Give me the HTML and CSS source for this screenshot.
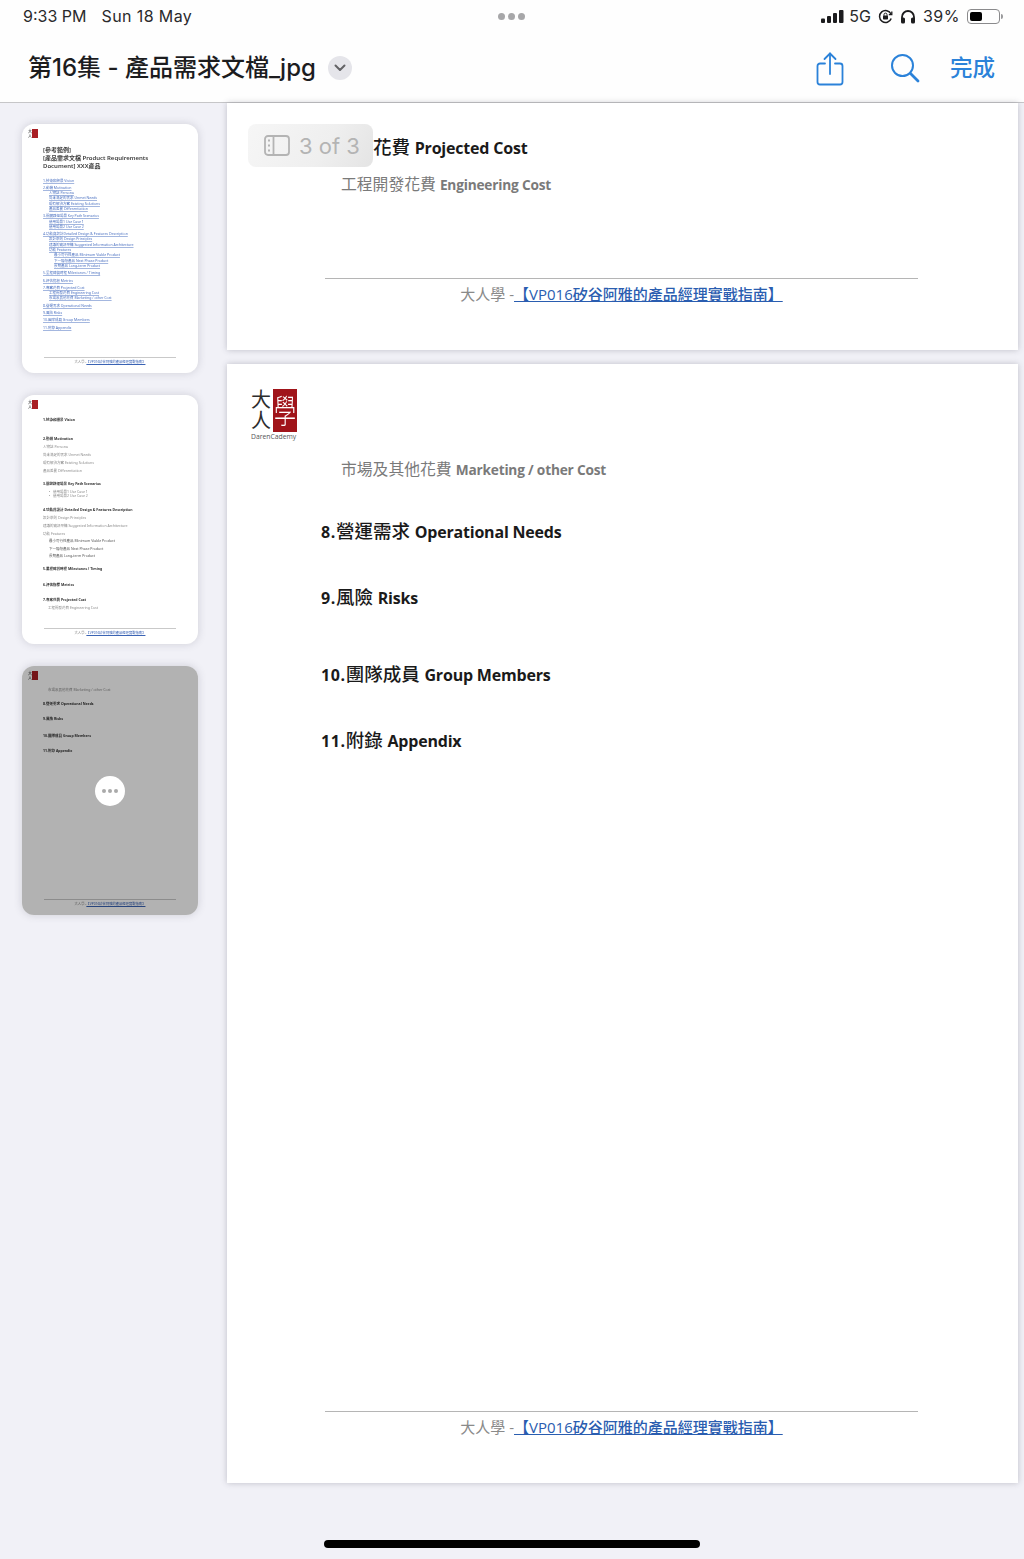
FILE: index.html
```html
<!DOCTYPE html>
<html lang="zh-Hant">
<head>
<meta charset="utf-8">
<title>第16集 - 產品需求文檔_jpg</title>
<link rel="stylesheet" href="styles.css">
</head>
<body>
<div class="app">
  <header class="header">
    <div class="status">
      <div class="status-left"><span>9:33 PM</span><span class="status-date">Sun 18 May</span></div>
      <div class="status-dots"><i></i><i></i><i></i></div>
      <div class="status-right">
        <svg class="signal" width="24" height="13" viewBox="0 0 24 13"><rect x="0" y="8.5" width="4" height="4.5" rx="1"/><rect x="6" y="6" width="4" height="7" rx="1"/><rect x="12" y="3" width="4" height="10" rx="1"/><rect x="18" y="0" width="4.5" height="13" rx="1"/></svg>
        <span>5G</span>
        <svg class="glyph" width="15" height="15" viewBox="0 0 15 15" fill="none" stroke="#1c1c1e" stroke-width="1.5"><path d="M13.2 9.5A6 6 0 1 1 13 5"/><path d="M13.8 2.6V5.6H10.8" stroke-width="1.3"/><rect x="5" y="6.6" width="5" height="3.9" rx=".7" fill="#1c1c1e" stroke="none"/><path d="M6 6.8V5.6a1.5 1.5 0 0 1 3 0v1.2" stroke-width="1"/></svg>
        <svg class="glyph" width="16" height="15" viewBox="0 0 16 15" fill="none"><path d="M2 10V8a6 6 0 0 1 12 0v2" stroke="#1c1c1e" stroke-width="1.8"/><rect x="1" y="8.5" width="4" height="6" rx="1.6" fill="#1c1c1e"/><rect x="11" y="8.5" width="4" height="6" rx="1.6" fill="#1c1c1e"/></svg>
        <span class="pct">39%</span>
        <span class="battery"><span class="battery-level"></span></span>
      </div>
    </div>
    <div class="toolbar">
      <div class="title-wrap">
        <h1 class="doc-title">第16集 - 產品需求文檔_jpg</h1>
        <span class="chevron"><svg width="12" height="8" viewBox="0 0 12 8" fill="none" stroke="#636366" stroke-width="2" stroke-linecap="round" stroke-linejoin="round"><path d="M1.5 1.5 6 6l4.5-4.5"/></svg></span>
      </div>
      <div class="actions">
        <svg class="share" width="28" height="34" viewBox="0 0 28 34" fill="none" stroke="#2b82d9" stroke-width="1.8" stroke-linecap="round" stroke-linejoin="round"><path d="M9 11.5H4a2.5 2.5 0 0 0-2.500 2.500v16A2.500 2.500 0 0 0 4 32.500h20a2.500 2.500 0 0 0 2.500-2.500V14a2.500 2.500 0 0 0-2.500-2.500h-5"/><path d="M14 22V1.500"/><path d="M8.500 7 14 1.500 19.500 7"/></svg>
        <svg class="search" width="30" height="30" viewBox="0 0 30 30" fill="none" stroke="#2b82d9" stroke-linecap="round"><circle cx="12.500" cy="12.500" r="10.500" stroke-width="2"/><path d="M20.500 20.500 28 28" stroke-width="2.800"/></svg>
        <span class="done">完成</span>
      </div>
    </div>
  </header>

  <div class="workspace">
    <aside class="sidebar">
      <div class="thumb">
        <div class="t-logo"><span class="t-logo-ink">大人</span><span class="t-logo-red"></span></div>
        <div class="t-title">[參考範例]<br>[產品需求文檔 Product Requirements<br>Document] XXX產品</div>
        <div class="t-toc">
          <a class="sec">1.技術和願景 Vision</a>
          <a class="sec">2.動機 Motivation</a>
          <a class="l1">人物誌 Persona</a>
          <a class="l1">尚未滿足的需求 Unmet Needs</a>
          <a class="l1">現有解決方案 Existing Solutions</a>
          <a class="l1">產品差異 Differentiation</a>
          <a class="sec">3.關鍵路徑場景 Key Path Scenarios</a>
          <a class="l1">使用場景1 Use Case 1</a>
          <a class="l1">使用場景2 Use Case 2</a>
          <a class="sec">4.功能與設計Detailed Design &amp; Features Description</a>
          <a class="l1">設計準則 Design Principles</a>
          <a class="l1">建議的資訊架構 Suggested Information Architecture</a>
          <a class="l1">功能 Features</a>
          <a class="l2">最小可行性產品 Minimum Viable Product</a>
          <a class="l2">下一階段產品 Next Phase Product</a>
          <a class="l2">長期產品 Long-term Product</a>
          <a class="sec">5.里程碑與時程 Milestones / Timing</a>
          <a class="sec">6.評估指標 Metrics</a>
          <a class="sec">7.專案花費 Projected Cost</a>
          <a class="l1">工程開發花費 Engineering Cost</a>
          <a class="l1">市場及其他花費 Marketing / other Cost</a>
          <a class="sec">8.營運需求 Operational Needs</a>
          <a class="sec">9.風險 Risks</a>
          <a class="sec">10.團隊成員 Group Members</a>
          <a class="sec">11.附錄 Appendix</a>
        </div>
        <div class="t-foot"><span>大人學 -</span><a>【VP016矽谷阿雅的產品經理實戰指南】</a></div>
      </div>

      <div class="thumb">
        <div class="t-logo"><span class="t-logo-ink">大人</span><span class="t-logo-red"></span></div>
        <div class="t-body t-body-2">
          <p class="h">1.技術和願景 Vision</p>
          <p class="h gap-xl">2.動機 Motivation</p>
          <p class="s">人物誌 Persona</p>
          <p class="s">尚未滿足的需求 Unmet Needs</p>
          <p class="s">現有解決方案 Existing Solutions</p>
          <p class="s">產品差異 Differentiation</p>
          <p class="h gap-m">3.關鍵路徑場景 Key Path Scenarios</p>
          <p class="b">使用場景1 Use Case 1</p>
          <p class="b tight">使用場景2 Use Case 2</p>
          <p class="h gap-ml">4.功能與設計 Detailed Design &amp; Features Description</p>
          <p class="s">設計準則 Design Principles</p>
          <p class="s">建議的資訊架構 Suggested Information Architecture</p>
          <p class="s">功能 Features</p>
          <p class="s i2">最小可行性產品 Minimum Viable Product</p>
          <p class="s i2">下一階段產品 Next Phase Product</p>
          <p class="s i2">長期產品 Long-term Product</p>
          <p class="h gap-m">5.里程碑與時程 Milestones / Timing</p>
          <p class="h gap-l">6.評估指標 Metrics</p>
          <p class="h gap-l">7.專案花費 Projected Cost</p>
          <p class="s i1">工程開發花費 Engineering Cost</p>
        </div>
        <div class="t-foot"><span>大人學 -</span><a>【VP016矽谷阿雅的產品經理實戰指南】</a></div>
      </div>

      <div class="thumb">
        <div class="t-logo"><span class="t-logo-ink">大人</span><span class="t-logo-red"></span></div>
        <div class="t-body t-body-3">
          <p class="s i1">市場及其他花費 Marketing / other Cost</p>
          <p class="h gap-s">8.營運需求 Operational Needs</p>
          <p class="h gap-sm">9.風險 Risks</p>
          <p class="h gap-sl">10.團隊成員 Group Members</p>
          <p class="h gap-sm">11.附錄 Appendix</p>
        </div>
        <div class="t-foot"><span>大人學 -</span><a>【VP016矽谷阿雅的產品經理實戰指南】</a></div>
        <div class="thumb-dim"></div>
        <div class="thumb-more"><i></i><i></i><i></i></div>
      </div>
    </aside>

    <main class="pages">
      <section class="page page-cropped">
        <h2 class="heading"><b class="num">7.</b>專案花費 <b>Projected Cost</b></h2>
        <p class="sub sub-first">工程開發花費 <b>Engineering Cost</b></p>
        <div class="footer"><span>大人學 -</span><a>【VP016矽谷阿雅的產品經理實戰指南】</a></div>
      </section>

      <section class="page page-full">
        <div class="logo">
          <div class="logo-mark">
            <div class="logo-ink"><span>大</span><span>人</span></div>
            <div class="logo-red"><span>學</span></div>
          </div>
          <div class="logo-name">DarenCademy</div>
        </div>
        <p class="sub sub-market">市場及其他花費 <b>Marketing / other Cost</b></p>
        <h2 class="heading h8"><b class="num">8.</b>營運需求 <b>Operational Needs</b></h2>
        <h2 class="heading h9"><b class="num">9.</b>風險 <b>Risks</b></h2>
        <h2 class="heading h10"><b class="num">10.</b>團隊成員 <b>Group Members</b></h2>
        <h2 class="heading h9"><b class="num">11.</b>附錄 <b>Appendix</b></h2>
        <div class="footer"><span>大人學 -</span><a>【VP016矽谷阿雅的產品經理實戰指南】</a></div>
      </section>
    </main>
  </div>

  <div class="page-pill">
    <svg width="26" height="21" viewBox="0 0 26 21" fill="none" stroke="#b4b4b4" stroke-width="1.800"><rect x="1" y="1" width="24" height="19" rx="3"/><path d="M9.500 1v19"/><path d="M4 5.500h2M4 10.500h2M4 15.500h2" stroke-width="2.200"/></svg>
    <span>3 of 3</span>
  </div>
  <div class="home-bar"></div>
</div>
</body>
</html>
```
FILE: styles.css
```css
* { box-sizing: border-box; }
html, body { margin: 0; padding: 0; }
body {
  width: 1024px;
  height: 1559px;
  overflow: hidden;
  background: #f1f1f7;
  font-family: Inter, "Noto Sans CJK TC", sans-serif;
  color: #1c1c1e;
}
.app { position: relative; width: 1024px; height: 1559px; display: flex; flex-direction: column; }

.header {
  height: 102.5px;
  flex: none;
  background: #fefefe;
  border-bottom: 1px solid #c6c6c8;
  display: flex;
  flex-direction: column;
}
.status {
  height: 33px;
  padding: 0 24px 1px 23px;
  display: grid;
  grid-template-columns: 1fr auto 1fr;
  align-items: center;
  font-size: 16px;
  line-height: 20px;
  color: #2a2a2c;
}
.status-left { display: flex; gap: 15px; }
.status-date { letter-spacing: .4px; }
.status-dots { display: flex; gap: 3px; }
.status-dots i { width: 7px; height: 7px; border-radius: 50%; background: #a7a7a9; }
.status-right { display: flex; align-items: center; justify-content: flex-end; gap: 7px; }
.pct { letter-spacing: .5px; }
.signal { fill: #1c1c1e; margin-right: -3px; }
.battery {
  position: relative;
  width: 33px;
  height: 15px;
  border: 1px solid #8a8a8c;
  border-radius: 4px;
  padding: 2px;
  display: block;
}
.battery::after {
  content: "";
  position: absolute;
  right: -4px;
  top: 4px;
  width: 2px;
  height: 5px;
  border-radius: 0 2px 2px 0;
  background: #9a9a9c;
}
.battery-level { display: block; width: 12px; height: 9px; background: #000; border-radius: 2px; }

.toolbar {
  flex: 1;
  display: flex;
  align-items: center;
  justify-content: space-between;
  padding: 2px 29px 0 28px;
}
.title-wrap { display: flex; align-items: center; gap: 12px; }
.doc-title { margin: 0; font-size: 24px; line-height: 32px; font-weight: 500; color: #1c1c1e; }
.chevron {
  width: 24px;
  height: 24px;
  border-radius: 50%;
  background: #e5e5ea;
  display: flex;
  align-items: center;
  justify-content: center;
}
.actions { display: flex; align-items: center; }
.share { margin-right: 46px; margin-top: 1px; }
.search { margin-right: 30px; }
.done { font-size: 22.500px; line-height: 30px; font-weight: 500; color: #2b82d9; }

.workspace { flex: 1; display: flex; min-height: 0; }
.sidebar {
  width: 227px;
  flex: none;
  padding: 21px 0 0 22px;
  display: flex;
  flex-direction: column;
  gap: 22px;
}
.thumb {
  position: relative;
  width: 176px;
  height: 249px;
  border-radius: 12px;
  background: #fff;
  overflow: hidden;
  box-shadow: 0 0 9px rgba(70, 70, 90, .2);
  font-family: "Noto Sans", "Noto Sans CJK TC", sans-serif;
  font-size: 3.500px;
}
.t-logo { position: absolute; left: 6px; top: 5px; display: flex; width: 10px; height: 11px; filter: blur(.3px); }
.t-logo-ink { width: 4px; font-size: 4px; line-height: 5px; color: #333; }
.t-logo-red { width: 6px; height: 9px; background: #a81f24; }

.t-title {
  position: absolute;
  left: 21px;
  top: 22px;
  font-size: 6px;
  line-height: 8px;
  font-weight: 600;
  color: #3a3a3a;
  white-space: nowrap;
  filter: blur(.4px);
}
.t-toc { position: absolute; left: 21px; top: 52px; white-space: nowrap; color: #4a70c0; filter: blur(.4px); }
.t-toc a { display: block; line-height: 5.300px; height: 5.300px; text-decoration: underline; text-decoration-thickness: .2px; text-decoration-color: rgba(74, 112, 192, .5); }
.t-toc .sec { margin-top: 2px; }
.t-toc .l1 { padding-left: 6px; }
.t-toc .l2 { padding-left: 11px; }

.t-foot {
  position: absolute;
  left: 22px;
  top: 233px;
  width: 132px;
  padding-top: 1px;
  border-top: .7px solid #c9c9c9;
  text-align: center;
  font-size: 3.300px;
  line-height: 5px;
  white-space: nowrap;
  color: #8a8a8a;
  filter: blur(.3px);
}
.t-foot a { color: #3a63b4; text-decoration: underline; text-decoration-thickness: .3px; }

.t-body { position: absolute; left: 21px; top: 0; white-space: nowrap; filter: blur(.4px); }
.t-body-2 { top: 22px; }
.t-body-3 { top: 18px; }
.t-body p { margin: 0; line-height: 5px; height: 5px; }
.t-body .h { font-weight: 700; color: #333; }
.t-body .s { color: #8a8a8a; margin-top: 3px; }
.t-body .b { color: #8a8a8a; margin-top: 3px; padding-left: 10px; position: relative; }
.t-body .b::before { content: "•"; position: absolute; left: 6px; }
.t-body .tight { margin-top: -1px; }
.t-body .i1 { padding-left: 5px; }
.t-body .i2 { padding-left: 6px; margin-top: 2.500px; color: #555; }
.t-body .gap-xl { margin-top: 14px; }
.t-body .gap-m { margin-top: 8px; }
.t-body .gap-ml { margin-top: 9px; }
.t-body .gap-l { margin-top: 10.500px; }
.t-body .gap-s { margin-top: 9px; }
.t-body .gap-sm { margin-top: 10px; }
.t-body .gap-sl { margin-top: 12px; }

.thumb-dim { position: absolute; inset: 0; background: rgba(0, 0, 0, .3); }
.thumb-more {
  position: absolute;
  left: 73px;
  top: 110px;
  width: 30px;
  height: 30px;
  border-radius: 50%;
  background: #fff;
  display: flex;
  align-items: center;
  justify-content: center;
  gap: 2px;
}
.thumb-more i { width: 4px; height: 4px; border-radius: 50%; background: #aaa; }

.pages { flex: 1; min-width: 0; padding-right: 6px; display: flex; flex-direction: column; gap: 14px; }
.page {
  position: relative;
  width: 791px;
  background: #fff;
  box-shadow: 0 0 6px rgba(60, 60, 80, .28);
  display: flex;
  flex-direction: column;
  font-family: "Open Sans", "Noto Sans CJK TC", sans-serif;
}
.page-cropped { height: 247.500px; padding-top: 32px; }
.page-full { height: 1119px; padding-top: 25px; }

.heading {
  margin: 0 0 0 94px;
  font-size: 18.500px;
  line-height: 24px;
  font-weight: 500;
  color: #1a1a1a;
  white-space: nowrap;
}
.heading b { font-weight: 700; font-size: 16px; letter-spacing: -.2px; }
.heading .num { font-size: 16px; letter-spacing: .6px; }
.sub {
  margin: 0 0 0 114px;
  font-size: 15.800px;
  line-height: 22px;
  color: #7a7a7a;
  white-space: nowrap;
}
.sub b { font-weight: 700; font-size: 13.700px; letter-spacing: -.2px; }
.sub-first { margin-top: 13px; }
.sub-market { margin-top: 16px; }
.h8 { margin-top: 38px; }
.h9 { margin-top: 41px; }
.h10 { margin-top: 52px; }

.footer {
  margin: auto 100px 0 98px;
  padding-top: 4px;
  height: 72px;
  border-top: 1px solid #b5b5b5;
  text-align: center;
  font-size: 15px;
  line-height: 22px;
  color: #8a8a8a;
  white-space: nowrap;
}
.footer a { color: #2a5db0; text-decoration: underline; font-weight: 500; }

.logo { margin-left: 24px; width: 46px; flex: none; }
.logo-mark { display: flex; gap: 2px; height: 43px; }
.logo-ink {
  width: 20px;
  display: flex;
  flex-direction: column;
  font-size: 20px;
  line-height: 21px;
  color: #2d2d2d;
  font-weight: 400;
}
.logo-red {
  width: 24px;
  height: 43px;
  background: #a0141a;
  color: #fff;
  font-size: 22px;
  line-height: 43px;
  text-align: center;
  font-weight: 300;
}
.logo-red span { display: inline-block; transform: scaleY(1.5); }
.logo-name { font-size: 6.800px; line-height: 10px; color: #555; white-space: nowrap; font-family: "Open Sans", sans-serif; }

.page-pill {
  position: absolute;
  left: 248px;
  top: 124px;
  width: 125px;
  height: 43px;
  border-radius: 8px;
  background: linear-gradient(120deg, #f6f6f6 0%, #efefef 60%, #e4e4e4 100%);
  display: flex;
  align-items: center;
  gap: 9px;
  padding-left: 16px;
  color: #b4b4b4;
  font-size: 22px;
  font-weight: 400;
}
.home-bar {
  position: absolute;
  left: 324px;
  top: 1540px;
  width: 376px;
  height: 8px;
  border-radius: 4px;
  background: #000;
}
```
